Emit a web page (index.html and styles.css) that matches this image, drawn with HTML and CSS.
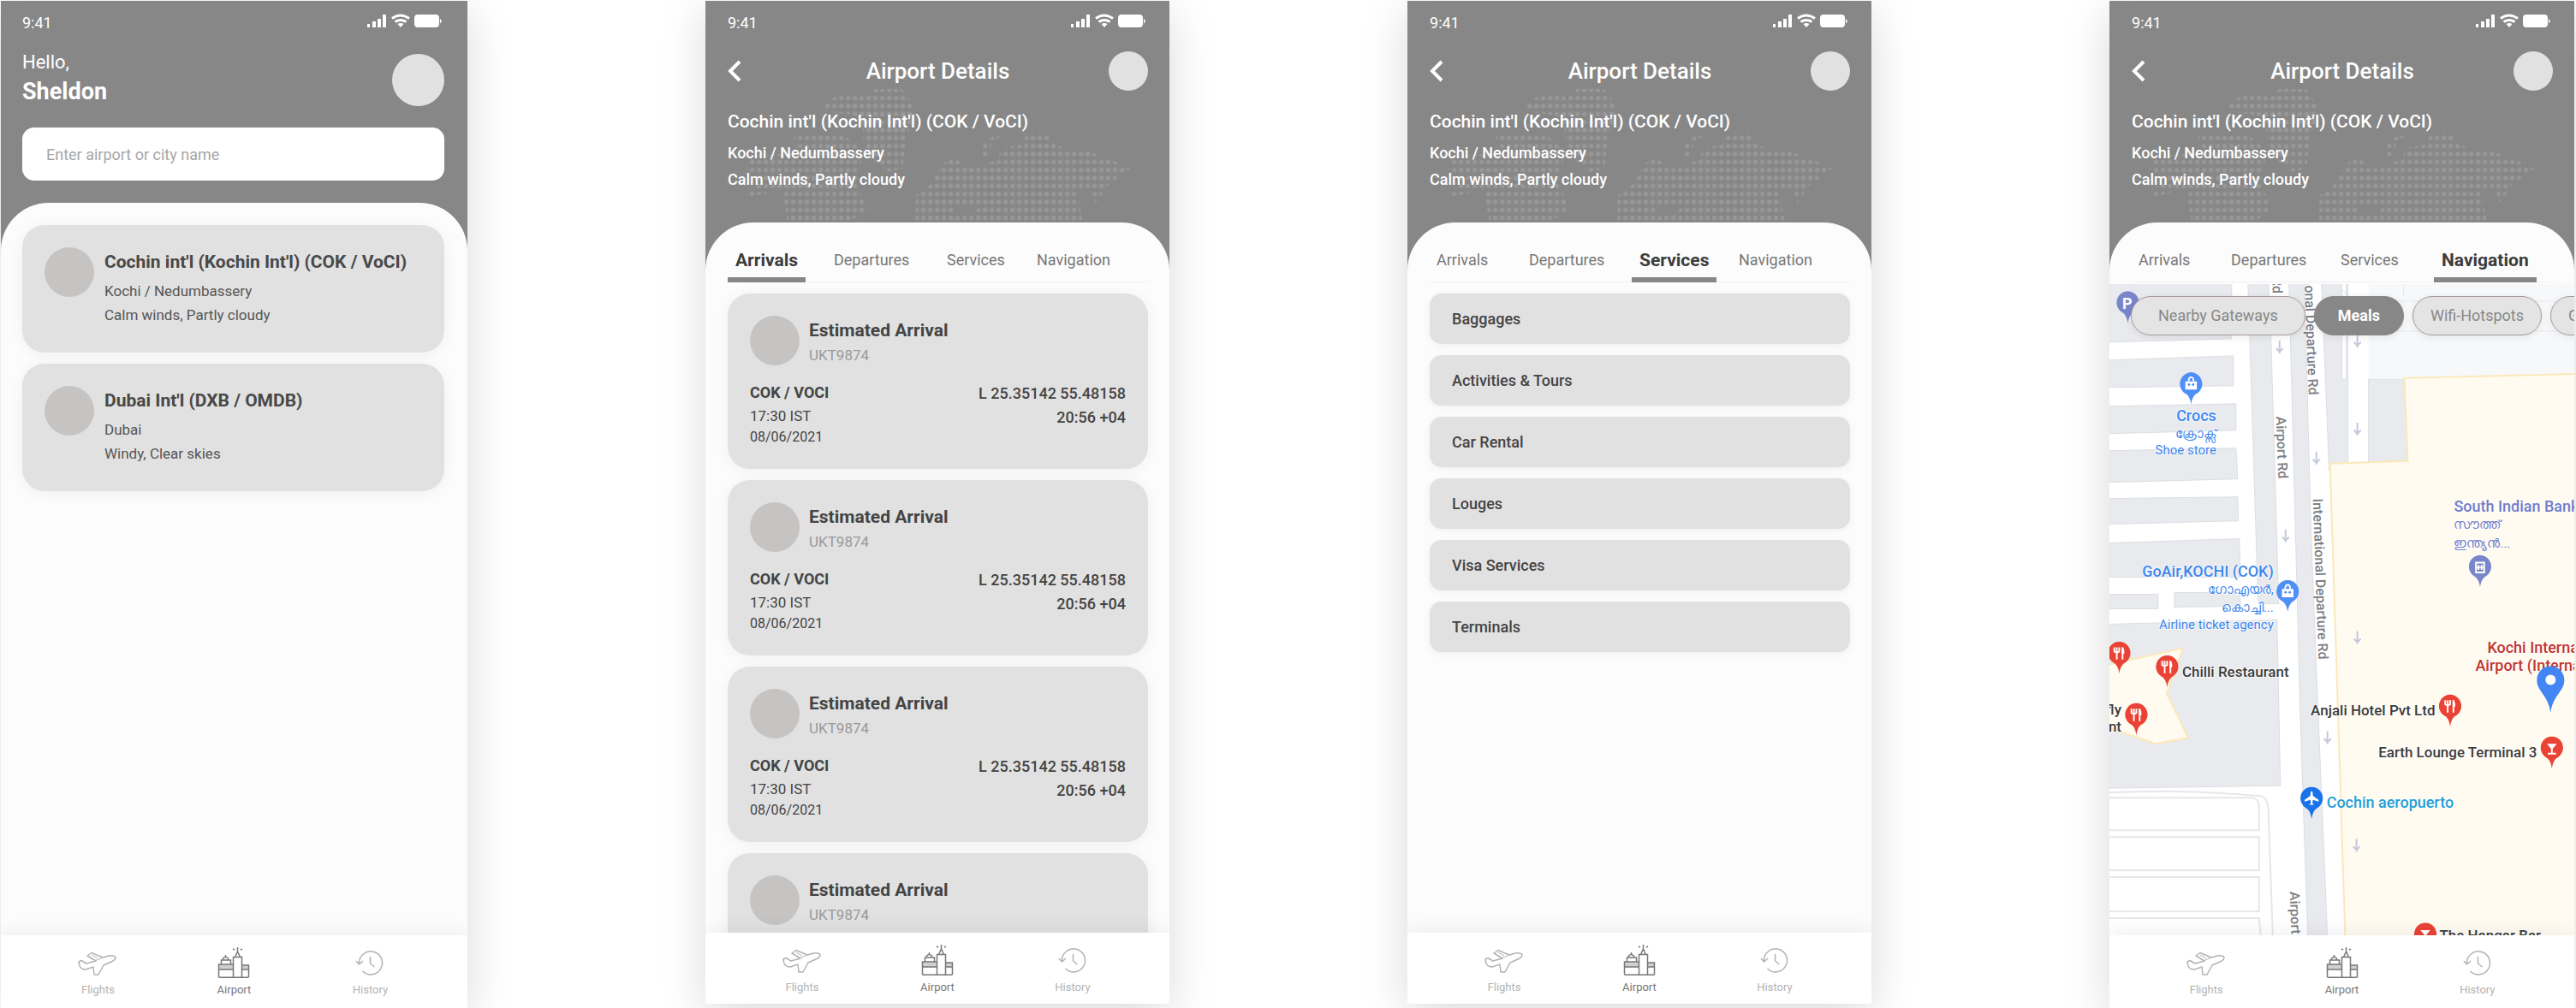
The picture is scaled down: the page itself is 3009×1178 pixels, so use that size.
FILE: index.html
```html
<!DOCTYPE html>
<html lang="en">
<head>
<meta charset="utf-8">
<meta name="viewport" content="width=device-width, initial-scale=1">
<title>Airport Details</title>
<link rel="stylesheet" href="styles.css">
</head>
<body>
<svg class="sprite" aria-hidden="true">
  <defs>
    <pattern id="dots" width="24" height="28" patternUnits="userSpaceOnUse" patternTransform="translate(2 5)">
      <circle cx="12" cy="14" r="8"/>
    </pattern>
  </defs>
  <symbol id="status" viewBox="0 0 88 17">
    <path fill="currentColor" d="M1 12h3v4H1zM7 9h4v7H7zM13 6h4v10h-4zM19 1h4v15h-4zM64 1h17q4 0 4 4v7q0 4-4 4H60q-4 0-4-4V5q0-4 4-4zM86 6q2 2 2 2.500 0 1-2 3z"/>
    <path fill="none" stroke="currentColor" stroke-width="3" d="M30 5.500q9.500-7 20 0M33.500 9.500q6.500-4 13 0"/>
    <path fill="currentColor" d="M36.500 12q3.500-2 7 0L40 16z"/>
  </symbol>
  <symbol id="back" viewBox="0 0 16 26"><path fill="none" stroke="currentColor" stroke-width="4" d="M14 2 3 13l11 11"/></symbol>
  <symbol id="flights" viewBox="0 0 46 38">
    <path fill="none" stroke="currentColor" stroke-width="1.500" stroke-linejoin="round" d="M1 18l3-1.500 6 3.500 11-3-10-6 5-3.500L29 13l7-2q6-1 8 1.500 0 3-4 5L30 22l-6 11h-5l-1-9-9 3q-5 0-7-4z"/>
    <path fill="none" stroke="currentColor" d="M16 10l7 4M20 17l9-4"/>
  </symbol>
  <symbol id="airport" viewBox="0 0 38 38">
    <path fill="none" stroke="currentColor" stroke-width="1.500" d="M1.500 36.200h35M18.500 36V12.500h10V36M20.500 12.500 23.500 6l3 6.500M23.500 6V1M18 3l2 1M29 3l-2 1M1.500 36V21h17M1.500 27h17M4.500 21v-5h11v5M6.500 16v-2q3-3 6 0v2M9.500 13v-3M28.500 22h8v14M28.500 27h8"/>
    <path fill="currentColor" opacity=".35" d="M2 21h16v6H2zM29 22h7v5h-7z"/>
  </symbol>
  <symbol id="history" viewBox="0 0 34 38">
    <path fill="none" stroke="currentColor" stroke-width="1.500" d="M4.500 20a13.500 13.500 0 1 1 4 9M1 17l3.500 4 4.500-4M17.500 12v8l5 4"/>
  </symbol>
  <symbol id="world" viewBox="0 0 542 258">
    <g transform="translate(26 97) scale(.3333)" fill="url(#dots)">
      <path d="M515 15h95l45 60-5 35-25 75-12 110-55 12-80-75-8-120-135-20 10-30 50-32h70l15 20z"/>
      <path d="M230 170h170l50 40 20 40-15 100 35 90-70 45H210l-20-120-135 35 55-60-50-50 20-40 160-10z"/>
      <path d="M780 250l75 45 95-35 5-35 70-15 30-45h70l10 40 50 20 70 5 160 60-85 65-40 60-20-55-45 10 20 115H658v-95l52-40 35-60z"/>
      <path d="M895 255v-50l50-35h20l-40 40-10 45z"/>
    </g>
    <path fill="#878787" d="M290 242l14-6 16 3-6 8-20 4z"/>
  </symbol>
  <symbol id="pin" viewBox="0 0 28 39"><path fill="currentColor" d="M14 0a14 14 0 0 1 13 18q-2 6-8 9-4 4-5 12-1-8-5-12-6-3-8-9A14 14 0 0 1 14 0z"/></symbol>
  <symbol id="pin-bag" viewBox="0 0 28 39"><use href="#pin"/><path fill="#fff" d="M7 11h14v10H7z"/><path fill="none" stroke="#fff" stroke-width="2" d="M11 11q0-5 3-5t3 5"/><circle cx="11.500" cy="15" r="1.500" fill="currentColor"/><circle cx="16.500" cy="15" r="1.500" fill="currentColor"/></symbol>
  <symbol id="pin-bank" viewBox="0 0 28 39"><use href="#pin"/><path fill="none" stroke="#fff" stroke-width="2" d="M9 9h10v12H9zM12 12v6M16 12v6M9 15h10"/></symbol>
  <symbol id="pin-food" viewBox="0 0 28 39"><use href="#pin"/><path fill="none" stroke="#fff" stroke-width="2" d="M11 13v9M8 7v5q3 3 6 0V7M11 7v6M18 7v15"/><path fill="#fff" d="M17 7q4 1 3 8h-3z"/></symbol>
  <symbol id="pin-bar" viewBox="0 0 28 39"><use href="#pin"/><path fill="#fff" d="M8 9h12l-5 6v5h4v2H9v-2h4v-5z"/></symbol>
  <symbol id="pin-plane" viewBox="0 0 28 39"><use href="#pin"/><path fill="#fff" d="M14 5q1.500 1 1.500 6l7 5v2l-7-2-.5 4 2 2h-6l2-2-.5-4-7 2v-2l7-5q0-5 1.500-6z"/></symbol>
  <symbol id="down" viewBox="0 0 10 16"><path fill="none" stroke="currentColor" stroke-width="2" d="M5 0v15M1 9l4 4 4-4"/></symbol>
</svg>

<main class="board">

  <section class="phone phone--tall phone--home">
    <header class="top">
      <div class="status"><span>9:41</span><svg class="status__icons"><use href="#status"/></svg></div>
      <div class="greeting">
        <p class="greeting__text">Hello,<strong>Sheldon</strong></p>
        <span class="avatar avatar--large"></span>
      </div>
      <div class="search"><input type="text" aria-label="Airport or city name" placeholder="Enter airport or city name"></div>
    </header>
    <div class="sheet sheet--home">
      <article class="card place">
        <span class="dot"></span>
        <div><h2>Cochin int'l (Kochin Int'l) (COK / VoCI)</h2><p>Kochi / Nedumbassery</p><p>Calm winds, Partly cloudy</p></div>
      </article>
      <article class="card place">
        <span class="dot"></span>
        <div><h2>Dubai Int'l (DXB / OMDB)</h2><p>Dubai</p><p>Windy, Clear skies</p></div>
      </article>
    </div>
    <nav class="nav">
      <a href="#flights-page"><svg class="i-flights"><use href="#flights"/></svg>Flights</a>
      <a href="#airport-page" class="is-current"><svg class="i-airport"><use href="#airport"/></svg>Airport</a>
      <a href="#history-page"><svg class="i-history"><use href="#history"/></svg>History</a>
    </nav>
  </section>

  <section class="phone">
    <header class="top">
      <svg class="world" preserveAspectRatio="xMinYMax meet"><use href="#world"/></svg>
      <div class="status"><span>9:41</span><svg class="status__icons"><use href="#status"/></svg></div>
      <div class="titlebar"><button class="back" aria-label="Back"><svg><use href="#back"/></svg></button><h1>Airport Details</h1><span class="avatar"></span></div>
      <div class="summary"><h2>Cochin int'l (Kochin Int'l) (COK / VoCI)</h2><p>Kochi / Nedumbassery</p><p>Calm winds, Partly cloudy</p></div>
    </header>
    <div class="sheet">
      <div class="tabs tabs--first"><button class="is-active">Arrivals</button><button>Departures</button><button>Services</button><button>Navigation</button></div>
      <div class="list">
        <article class="card flight">
          <div class="flight__head"><span class="dot"></span><div><h3>Estimated Arrival</h3><p>UKT9874</p></div></div>
          <div class="flight__body"><div><p class="code">COK / VOCI</p><p class="time">17:30 IST</p><p class="date">08/06/2021</p></div><div class="flight__pos"><p>L 25.35142 55.48158</p><p>20:56 +04</p></div></div>
        </article>
        <article class="card flight">
          <div class="flight__head"><span class="dot"></span><div><h3>Estimated Arrival</h3><p>UKT9874</p></div></div>
          <div class="flight__body"><div><p class="code">COK / VOCI</p><p class="time">17:30 IST</p><p class="date">08/06/2021</p></div><div class="flight__pos"><p>L 25.35142 55.48158</p><p>20:56 +04</p></div></div>
        </article>
        <article class="card flight">
          <div class="flight__head"><span class="dot"></span><div><h3>Estimated Arrival</h3><p>UKT9874</p></div></div>
          <div class="flight__body"><div><p class="code">COK / VOCI</p><p class="time">17:30 IST</p><p class="date">08/06/2021</p></div><div class="flight__pos"><p>L 25.35142 55.48158</p><p>20:56 +04</p></div></div>
        </article>
        <article class="card flight">
          <div class="flight__head"><span class="dot"></span><div><h3>Estimated Arrival</h3><p>UKT9874</p></div></div>
        </article>
      </div>
    </div>
    <nav class="nav">
      <a href="#flights-page"><svg class="i-flights"><use href="#flights"/></svg>Flights</a>
      <a href="#airport-page" class="is-current"><svg class="i-airport"><use href="#airport"/></svg>Airport</a>
      <a href="#history-page"><svg class="i-history"><use href="#history"/></svg>History</a>
    </nav>
  </section>

  <section class="phone">
    <header class="top">
      <svg class="world" preserveAspectRatio="xMinYMax meet"><use href="#world"/></svg>
      <div class="status"><span>9:41</span><svg class="status__icons"><use href="#status"/></svg></div>
      <div class="titlebar"><button class="back" aria-label="Back"><svg><use href="#back"/></svg></button><h1>Airport Details</h1><span class="avatar"></span></div>
      <div class="summary"><h2>Cochin int'l (Kochin Int'l) (COK / VoCI)</h2><p>Kochi / Nedumbassery</p><p>Calm winds, Partly cloudy</p></div>
    </header>
    <div class="sheet">
      <div class="tabs"><button>Arrivals</button><button>Departures</button><button class="is-active">Services</button><button>Navigation</button></div>
      <div class="list">
        <button class="service">Baggages</button>
        <button class="service">Activities &amp; Tours</button>
        <button class="service">Car Rental</button>
        <button class="service">Louges</button>
        <button class="service">Visa Services</button>
        <button class="service">Terminals</button>
      </div>
    </div>
    <nav class="nav">
      <a href="#flights-page"><svg class="i-flights"><use href="#flights"/></svg>Flights</a>
      <a href="#airport-page" class="is-current"><svg class="i-airport"><use href="#airport"/></svg>Airport</a>
      <a href="#history-page"><svg class="i-history"><use href="#history"/></svg>History</a>
    </nav>
  </section>

  <section class="phone phone--tall">
    <header class="top">
      <svg class="world" preserveAspectRatio="xMinYMax meet"><use href="#world"/></svg>
      <div class="status"><span>9:41</span><svg class="status__icons"><use href="#status"/></svg></div>
      <div class="titlebar"><button class="back" aria-label="Back"><svg><use href="#back"/></svg></button><h1>Airport Details</h1><span class="avatar"></span></div>
      <div class="summary"><h2>Cochin int'l (Kochin Int'l) (COK / VoCI)</h2><p>Kochi / Nedumbassery</p><p>Calm winds, Partly cloudy</p></div>
    </header>
    <div class="sheet">
      <div class="tabs"><button>Arrivals</button><button>Departures</button><button>Services</button><button class="is-active">Navigation</button></div>
      <div class="map">
        <svg class="map__canvas" viewBox="0 0 544 762" preserveAspectRatio="xMinYMin slice" role="img" aria-label="Map of the airport">
          <rect width="544" height="762" fill="#fff"/>
          <g fill="#e8eaee" stroke="#dcdee3" stroke-width="1">
            <path d="M-2-2h145v66L-2 68zM-2 89l147-5v35l-147 2zM-2 143l150-3v31l-150 4zM-2 195l150-3 2 36-152 4zM-2 251l152-2 1 28-153 4zM-2 303l154-5 1 45H-2zM-2 363h59v17H-2zM76 361h77v16l-77 1zM-2 398l198-5 4 194-202 3z"/>
            <path d="M162-2h24l3 66 9 310h-24z"/>
            <path d="M210-2h18l8 300 8 200 11 266h-23l-9-266z"/>
            <path d="M248-2h31v220h-22zM303 111h45v98h-45z"/>
            <path fill="#fff" d="M272-2h5v113h-5z"/>
          </g>
          <path fill="#f6f8fa" d="M303 0h241v111H303z"/>
          <path fill="none" stroke="#e6e8ec" d="M303 20h241M303 55h241M344 0v14M268 0l16 22"/>
          <g fill="#fffbf0" stroke="#fce8b8" stroke-width="2">
            <path d="M258 210l91-3-4-97 205-5v665H276z"/>
            <path d="M-4 446l90-20-19 53 25 52-38 7-58-20z"/>
          </g>
          <g fill="none" stroke="#e6e7e9" stroke-width="2">
            <path d="M0 595q90-4 176 4 9 0 10 18l5 145M0 601h165q10 0 10 10v28H0M0 647h175v39H0M0 694h175v40H0M0 742h175l2 20"/>
          </g>
          <g color="#c3c7da">
            <use href="#down" x="194" y="66" width="10" height="16"/><use href="#down" x="201" y="287" width="10" height="16"/>
            <use href="#down" x="237" y="196" width="10" height="16"/><use href="#down" x="285" y="59" width="10" height="16"/>
            <use href="#down" x="285" y="162" width="10" height="16"/><use href="#down" x="285" y="406" width="10" height="16"/>
            <use href="#down" x="250" y="523" width="10" height="16"/><use href="#down" x="284" y="649" width="10" height="16"/>
          </g>
          <g class="road">
            <text transform="translate(191 11) rotate(89)" text-anchor="end">Airport Rd</text>
            <text transform="translate(195 155) rotate(88)">Airport Rd</text>
            <text transform="translate(211 711) rotate(88)">Airport Rd</text>
            <text transform="translate(233 130) rotate(88)" text-anchor="end">International Departure Rd</text>
            <text transform="translate(238 251) rotate(88)">International Departure Rd</text>
          </g>
          <g class="label label--shop" text-anchor="end">
            <text x="125" y="160">Crocs</text><text class="small" x="125" y="180">ക്രോക്സ്</text><text class="small" x="125" y="199">Shoe store</text>
            <text x="192" y="342">GoAir,KOCHI (COK)</text><text class="small" x="192" y="362">ഗോഎയർ,</text><text class="small" x="192" y="384">കൊച്ചി...</text><text class="small" x="192" y="404">Airline ticket agency</text>
          </g>
          <g class="label label--bank">
            <text x="403" y="266">South Indian Bank</text><text class="small" x="403" y="286">സൗത്ത്</text><text class="small" x="403" y="308">ഇന്ത്യൻ...</text>
          </g>
          <g class="label label--airport"><text x="442" y="432">Kochi International</text><text x="428" y="453">Airport (International)</text></g>
          <g class="label label--food">
            <text x="85" y="460">Chilli Restaurant</text>
            <text x="14" y="504" text-anchor="end">Firefly</text><text x="14" y="524" text-anchor="end">Restaurant</text>
            <text x="381" y="505" text-anchor="end">Anjali Hotel Pvt Ltd</text>
            <text x="500" y="554" text-anchor="end">Earth Lounge Terminal 3</text>
            <text x="386" y="768">The Hangar Bar</text>
          </g>
          <g class="label label--aero"><text x="254" y="613">Cochin aeropuerto</text></g>
          <g color="#7986cb">
            <use href="#pin" x="8" y="8" width="27" height="38"/><text class="parking" x="15" y="29">P</text>
            <use href="#pin-bank" x="420" y="317" width="27" height="38"/>
          </g>
          <g color="#4f8ff7"><use href="#pin-bag" x="82" y="103" width="27" height="38"/><use href="#pin-bag" x="195" y="346" width="27" height="38"/></g>
          <g color="#ea4335">
            <use href="#pin-food" x="-2" y="418" width="27" height="38"/><use href="#pin-food" x="54" y="434" width="27" height="38"/>
            <use href="#pin-food" x="18" y="490" width="27" height="38"/><use href="#pin-food" x="385" y="480" width="27" height="38"/>
            <use href="#pin-bar" x="504" y="529" width="27" height="38"/><use href="#pin-bar" x="356" y="747" width="27" height="38"/>
          </g>
          <g color="#1a73e8"><use href="#pin-plane" x="223" y="588" width="27" height="38"/></g>
          <path fill="#4285f4" d="M516 447a16 16 0 0 1 16 17c0 12-14 18-16 38-2-20-16-26-16-38a16 16 0 0 1 16-17z"/><circle cx="516" cy="463" r="6" fill="#fff"/>
        </svg>
        <div class="chips"><button class="chip chip--wide">Nearby Gateways</button><button class="chip is-active">Meals</button><button class="chip">Wifi-Hotspots</button><button class="chip">Gates</button></div>
      </div>
    </div>
    <nav class="nav">
      <a href="#flights-page"><svg class="i-flights"><use href="#flights"/></svg>Flights</a>
      <a href="#airport-page" class="is-current"><svg class="i-airport"><use href="#airport"/></svg>Airport</a>
      <a href="#history-page"><svg class="i-history"><use href="#history"/></svg>History</a>
    </nav>
  </section>

</main>
</body>
</html>
```
FILE: styles.css
```css
* { box-sizing: border-box; }
body, h1, h2, h3, p { margin: 0; }
body { background: #fff; color: #444; font: 400 18px/26px Roboto, "Liberation Sans", sans-serif; }
button, input { font: inherit; color: inherit; border: 0; background: none; padding: 0; }
a { color: inherit; text-decoration: none; }

.sprite { position: absolute; width: 0; height: 0; }
#dots { fill: #989898; }

.board {
  display: grid;
  grid-template-columns: 545fr 542fr 542fr 543fr;
  column-gap: 9.25%;
  height: 100vh;
  padding: 1px 2px 0 1px;
  overflow: hidden;
}

/* Phone frame */
.phone {
  display: flex;
  flex-direction: column;
  min-width: 0;
  min-height: 0;
  margin-bottom: 5px;
  overflow: hidden;
  background: #878787;
  box-shadow: 0 12px 50px rgba(0, 0, 0, .15);
}
.phone--tall { margin-bottom: 0; }

.top { position: relative; padding: 15px 25px 0 26px; color: #fff; }
.phone--home .top { padding: 15px 27px 0 25px; }
.world { position: absolute; left: 0; bottom: 0; width: 542px; height: 258px; }
.status { position: relative; display: flex; justify-content: space-between; height: 22px; line-height: 22px; padding-right: 3px; }
.status__icons { width: 88px; height: 17px; }

.greeting { display: flex; justify-content: space-between; align-items: flex-end; margin-top: 18px; }
.greeting__text { font-size: 22px; line-height: 34px; }
.greeting__text strong { display: block; font-size: 27px; font-weight: 700; }
.avatar { width: 46px; height: 46px; border-radius: 50%; background: #e1e1e1; }
.avatar--large { width: 61px; height: 61px; }
.search { margin: 25px 0 26px; }
.search input { display: block; width: 100%; height: 62px; padding: 0 28px; border-radius: 14px; background: #fff; color: #444; }
.search input::placeholder { color: #a6a6a6; opacity: 1; }

.titlebar { position: relative; display: flex; justify-content: space-between; align-items: center; margin-top: 22px; }
.titlebar h1 { font-size: 26px; font-weight: 500; line-height: 30px; }
.back { width: 46px; height: 46px; text-align: left; }
.back svg { display: block; width: 16px; height: 26px; }
.summary { position: relative; padding: 21px 0 35px; }
.summary h2 { margin-bottom: 6px; font-size: 21px; font-weight: 500; line-height: 30px; }
.summary p { font-weight: 500; line-height: 31px; }

/* Content sheet */
.sheet {
  flex: 1;
  display: flex;
  flex-direction: column;
  min-height: 0;
  overflow: hidden;
  padding-top: 31px;
  background: #fcfcfc;
  border-radius: 56px 56px 0 0;
}
.sheet--home { gap: 13px; padding: 26px 27px 0 25px; }

.tabs { display: grid; grid-template-columns: 108px 128px 117px auto; justify-items: start; margin: 0 25px 0 26px; box-shadow: inset 0 -1px #f2f2f2; color: #777; }
.tabs--first { grid-template-columns: 116px 132px 105px auto; }
.tabs button { padding: 0 8px 7px; border-bottom: 6px solid transparent; }
.tabs .is-active { padding: 0 9px 7px; border-color: #878787; color: #3c3c3c; font-size: 21px; font-weight: 700; }

.list { display: flex; flex-direction: column; gap: 13px; padding: 13px 25px 0 26px; }

.card { flex: none; border-radius: 26px; background: #e1e1e1; box-shadow: 0 2px 18px rgba(0, 0, 0, .05); }
.dot { flex: none; width: 58px; height: 58px; border-radius: 50%; background: #c6c4c3; }

.place { display: flex; gap: 12px; min-height: 149px; padding: 26px; }
.place h2 { margin-bottom: 3px; font-size: 21px; font-weight: 700; line-height: 34px; color: #484848; }
.place p { font-size: 17px; line-height: 28px; color: #555; }

.flight { min-height: 204px; padding: 26px; }
.flight__head { display: flex; gap: 11px; }
.flight__head h3 { font-size: 21px; font-weight: 700; line-height: 34px; }
.flight__head p { font-size: 17px; line-height: 24px; color: #999; }
.flight__body { display: flex; justify-content: space-between; margin-top: 19px; }
.code { font-weight: 700; }
.time { font-size: 17px; line-height: 28px; }
.date { font-size: 16px; line-height: 22px; }
.flight__pos { text-align: right; font-weight: 500; line-height: 28px; }

.service { min-height: 59px; padding: 0 26px; border-radius: 14px; background: #e1e1e1; box-shadow: 0 2px 10px rgba(0, 0, 0, .05); font-weight: 500; text-align: left; }

/* Map */
.map { position: relative; flex: 1; min-height: 0; margin-top: 2px; }
.map__canvas { position: absolute; inset: 0; width: 100%; height: 100%; }
.chips { position: absolute; top: 14px; left: 25px; display: flex; gap: 10px; }
.chip { height: 46px; padding: 0 20px; border: 1px solid #a89a98; border-radius: 23px; background: #e4e4e4; color: #888; white-space: nowrap; box-shadow: 0 2px 10px rgba(0, 0, 0, .08); }
.chip--wide { padding: 0 31px; }
.chip.is-active { padding: 0 27px; border-color: #878787; background: #878787; color: #fff; font-weight: 700; }

.label { font-size: 18px; font-weight: 500; paint-order: stroke; stroke: #fff; stroke-width: 2px; stroke-opacity: .7; }
.label .small { font-size: 15px; font-weight: 400; }
.label--shop { fill: #3d86ee; }
.label--bank { fill: #6f7cc9; }
.label--airport { fill: #c23531; }
.label--food { fill: #3c3c3c; font-size: 17px; }
.label--aero { fill: #22a0d8; }
.road { fill: #7c8086; font-size: 16px; font-weight: 500; }
.parking { fill: #fff; font-size: 18px; font-weight: 700; }

/* Bottom navigation */
.nav { position: relative; display: grid; grid-template-columns: repeat(3, 1fr); height: 83px; padding: 13px 34px 0; background: #fff; box-shadow: 0 -4px 20px rgba(0, 0, 0, .06); }
.phone--tall .nav { height: 85px; }
.nav a { display: flex; flex-direction: column; align-items: center; gap: 3px; font-size: 13px; line-height: 20px; color: #b3b3b3; }
.nav .is-current { color: #777; }
.nav svg { height: 38px; }
.i-flights { width: 46px; }
.i-airport { width: 38px; }
.i-history { width: 34px; }
```
